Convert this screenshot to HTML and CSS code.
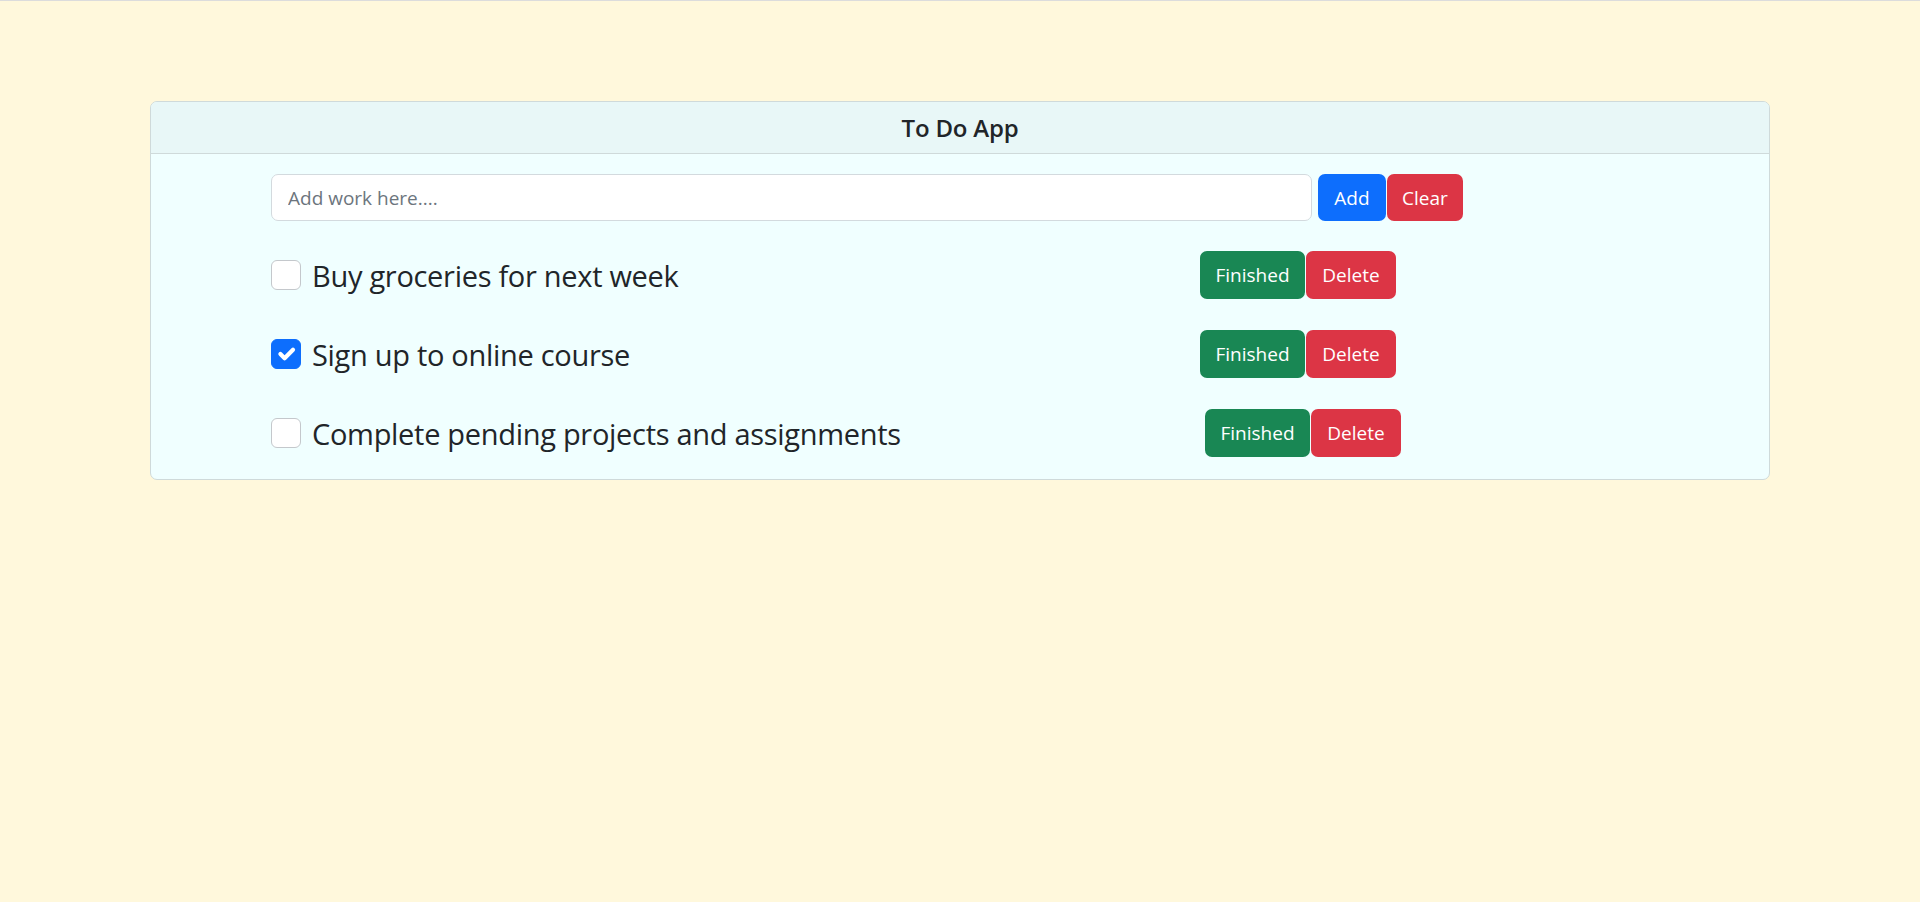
FILE: index.html
```html
<!DOCTYPE html>
<html lang="en">
<head>
<meta charset="utf-8">
<title>To Do App</title>
<link rel="stylesheet" href="styles.css">
</head>
<body>
<main class="page">
  <section class="card">
    <header class="card-header">To Do App</header>
    <div class="card-body">
      <form class="add-form">
        <input class="work-input" type="text" placeholder="Add work here....">
        <div class="btn-pair">
          <button type="button" class="btn btn-primary btn-add">Add</button>
          <button type="button" class="btn btn-danger btn-clear">Clear</button>
        </div>
      </form>
      <ul class="todo-list">
        <li class="todo-item">
          <label class="todo-label">
            <span class="check"></span>
            <span class="todo-text">Buy groceries for next week</span>
          </label>
          <div class="btn-pair">
            <button type="button" class="btn btn-success btn-finished">Finished</button>
            <button type="button" class="btn btn-danger btn-delete">Delete</button>
          </div>
        </li>
        <li class="todo-item">
          <label class="todo-label">
            <span class="check check-on"><svg viewBox="0 0 20 20" width="30" height="30"><path d="m6 10 3 3 6-6" fill="none" stroke="#fff" stroke-width="3" stroke-linecap="round" stroke-linejoin="round"/></svg></span>
            <span class="todo-text">Sign up to online course</span>
          </label>
          <div class="btn-pair">
            <button type="button" class="btn btn-success btn-finished">Finished</button>
            <button type="button" class="btn btn-danger btn-delete">Delete</button>
          </div>
        </li>
        <li class="todo-item todo-item-long">
          <label class="todo-label">
            <span class="check"></span>
            <span class="todo-text">Complete pending projects and assignments</span>
          </label>
          <div class="btn-pair">
            <button type="button" class="btn btn-success btn-finished">Finished</button>
            <button type="button" class="btn btn-danger btn-delete">Delete</button>
          </div>
        </li>
      </ul>
    </div>
  </section>
</main>
</body>
</html>
```
FILE: styles.css
```css
* {
  box-sizing: border-box;
}

html, body {
  margin: 0;
  padding: 0;
}

body {
  background: #fff8dc;
  border-top: 1px solid #dcdcdc;
  min-height: 902px;
  font-family: "Open Sans", "Liberation Sans", sans-serif;
  color: #212529;
}

.page {
  padding-top: 100px;
}

.card {
  width: 1620px;
  margin: 0 auto;
  background: #f0ffff;
  border: 1px solid #cfdada;
  border-radius: 7px;
  overflow: hidden;
}

.card-header {
  background: #e8f7f7;
  border-bottom: 1px solid #cfdada;
  height: 52px;
  display: flex;
  align-items: center;
  justify-content: center;
  font-size: 24px;
  font-weight: 600;
  letter-spacing: -0.2px;
}

.card-body {
  padding: 20px 0 22px 120px;
}

.add-form {
  display: flex;
  align-items: center;
  margin: 0;
}

.work-input {
  width: 1041px;
  height: 47px;
  border: 1px solid #d3dade;
  border-radius: 7px;
  background: #fff;
  padding: 0 16px;
  font-family: inherit;
  font-size: 19px;
  color: #212529;
  margin-right: 6px;
}

.work-input::placeholder {
  color: #6c757d;
}

.btn-pair {
  display: flex;
  gap: 1px;
}

.btn {
  border: 1px solid transparent;
  border-radius: 7px;
  color: #fff;
  font-family: inherit;
  font-size: 19px;
  height: 48px;
  padding: 0;
  display: flex;
  align-items: center;
  justify-content: center;
}

.add-form .btn {
  height: 47px;
}

.btn-primary { background: #0d6efd; }
.btn-danger { background: #dc3545; }
.btn-success { background: #198754; }

.btn-add { width: 68px; }
.btn-clear { width: 76px; }
.btn-finished { width: 105px; }
.btn-delete { width: 90px; }

.todo-list {
  list-style: none;
  margin: 30px 0 0;
  padding: 0;
  display: flex;
  flex-direction: column;
  gap: 31px;
}

.todo-item {
  display: flex;
  align-items: center;
  height: 48px;
}

.todo-label {
  display: flex;
  align-items: center;
  width: 929px;
  flex: none;
}

.todo-item-long .todo-label {
  width: 934px;
}

.check {
  width: 30px;
  height: 30px;
  border: 1px solid #c4c8cc;
  border-radius: 6px;
  background: #fff;
  flex: none;
  margin-right: 11px;
  display: flex;
  align-items: center;
  justify-content: center;
}

.check-on {
  background: #0d6efd;
  border-color: #0d6efd;
}

.check-on svg {
  display: block;
}

.todo-text {
  font-size: 29px;
  line-height: 44px;
  letter-spacing: -0.3px;
  white-space: nowrap;
  padding-top: 2px;
}
```
